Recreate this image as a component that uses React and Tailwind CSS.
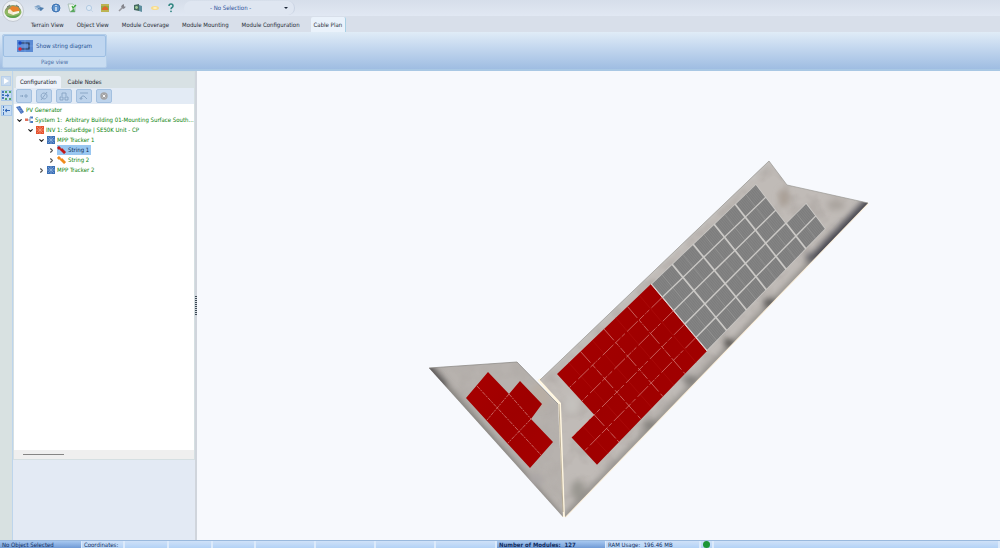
import React, { useState } from "react";
import { ChevronDown, ChevronRight } from "lucide-react";

const pages = [
  "Terrain View",
  "Object View",
  "Module Coverage",
  "Module Mounting",
  "Module Configuration",
  "Cable Plan",
];

const quickIcons = [
  {
    name: "Projects",
    art: (
      <>
        <path d="M0 4l4-2 3 1-3 2z" fill="#7fa3c8" />
        <path d="M3 6l3-2 4 1-3 3z" fill="#4f7dad" />
        <path d="M1 5l3 2 2-1" stroke="#9bbbd9" strokeWidth="1" fill="none" />
      </>
    ),
  },
  {
    name: "Information",
    art: (
      <>
        <circle cx="5" cy="5" r="4" fill="#5d92cc" stroke="#2d64a8" strokeWidth="0.8" />
        <path d="M5 2v1M5 4v4" stroke="#fff" strokeWidth="1.2" />
      </>
    ),
  },
  {
    name: "Check project",
    art: (
      <>
        <path d="M1 1h5l2 2v6H3z" fill="#eef5ee" stroke="#8aa79a" strokeWidth="0.6" />
        <path d="M5 3l1 2 3-3" stroke="#3faa3b" strokeWidth="1.3" fill="none" />
        <path d="M3 9l4-4 1 4z" fill="#5aa860" />
      </>
    ),
  },
  {
    name: "Search",
    art: (
      <>
        <circle cx="5" cy="5" r="2.6" fill="#dfeaf6" stroke="#b3cbe3" strokeWidth="1" />
        <path d="M7 7l2 2" stroke="#c6d6e7" strokeWidth="1" />
      </>
    ),
  },
  {
    name: "Map section",
    art: (
      <>
        <rect x="1" y="1" width="8" height="8" fill="#8fae4b" />
        <path d="M1 2h8M1 8h8" stroke="#e9b95c" strokeWidth="1.2" />
        <path d="M2 5l3-2 3 2v2H2z" fill="#df6a2c" />
      </>
    ),
  },
  {
    name: "Options",
    art: (
      <>
        <path d="M2 8l3-3" stroke="#9a9aa0" strokeWidth="1.6" />
        <path d="M4 4l1-2 2-1v2l1 1 1-1-1 2-2 1z" fill="#85868d" />
      </>
    ),
  },
  {
    name: "Screenshot",
    art: (
      <>
        <path d="M1 2l5-1v7l-5-1z" fill="#456a61" />
        <path d="M6 2l3 1v6l-3-1z" fill="#5e8fa0" />
        <circle cx="3.5" cy="4.5" r="1.4" fill="#a7d09c" />
      </>
    ),
  },
  {
    name: "Sun position",
    art: (
      <>
        <ellipse cx="5" cy="5" rx="4" ry="2" fill="#f8dc8c" />
        <ellipse cx="5" cy="5" rx="2" ry="0.8" fill="#fff7d8" />
      </>
    ),
  },
  {
    name: "Help",
    art: (
      <>
        <path d="M3 3q0-2 2-2t2 2q0 1-1 1.5t-1 1.7" stroke="#2f8580" strokeWidth="1.5" fill="none" />
        <circle cx="5" cy="8.3" r="0.9" fill="#2f8580" />
      </>
    ),
  },
];

const toolIcons = [
  { name: "Connect", art: <path d="M1 5h3M3 4l1 1-1 1M6 4h2v2H6z" /> },
  { name: "Clear", art: <path d="M5 2a3 3 0 1 0 .1 0M2 9l6-8" /> },
  { name: "Group", art: <path d="M3 5V2h4v3M1 6h3v3H1zM6 6h3v3H6z" /> },
  { name: "Route", art: <path d="M1 2h8M2 7q1-3 3-2l3 3M1 7h2v1H1z" /> },
];

const PanelIcon = ({ fill, line }) => (
  <svg viewBox="0 0 8 8" className="h-2 w-2 shrink-0">
    <rect width="8" height="8" fill={fill} />
    <path d="M1 1l6 6M7 1L1 7M4 0v8M0 4h8" stroke={line} strokeWidth="0.6" opacity="0.8" />
  </svg>
);

const StringIcon = ({ color }) => (
  <svg viewBox="0 0 9 8" className="h-2 w-[9px] shrink-0">
    <path d="M1 1l7 6" stroke={color} strokeWidth="1.5" />
    <path d="M0 2l2-2 2 2-2 2zM3 4l2-2 2 2-2 2zM5 6l2-2 2 2-2 2z" fill={color} />
  </svg>
);

const icons = {
  generator: (
    <svg viewBox="0 0 8 8" className="h-2 w-2 shrink-0">
      <path d="M0 1l4-1 4 6-3 2z" fill="#4670bd" />
      <path d="M1 3l4-1M3 5l4-1M2 1l4 6" stroke="#9bb8e8" strokeWidth="0.4" />
    </svg>
  ),
  system: (
    <svg viewBox="0 0 8 8" className="h-2 w-2 shrink-0">
      <path d="M3 4h2M5 1v6M5 1h1M5 6h1" stroke="#6b7f9d" strokeWidth="0.7" fill="none" />
      <rect x="0" y="2.5" width="3" height="2.5" fill="#e2705a" />
      <rect x="5.5" y="0.5" width="2.5" height="2" fill="#4a7cc4" />
      <rect x="5.5" y="5" width="2.5" height="2" fill="#4a7cc4" />
    </svg>
  ),
  inverter: <PanelIcon fill="#e5502d" line="#fac0a8" />,
  tracker: <PanelIcon fill="#3b6fb6" line="#b5d2f2" />,
  red: <StringIcon color="#c01818" />,
  orange: <StringIcon color="#f08a1c" />,
};

const treeRows = [
  { label: "PV Generator", icon: "generator", pad: "pl-[2px]", state: "none" },
  {
    label: "System 1:  Arbitrary Building 01-Mounting Surface South...",
    icon: "system",
    pad: "pl-[2px]",
    state: "open",
  },
  { label: "INV 1: SolarEdge | SE50K Unit - CP", icon: "inverter", pad: "pl-[13px]", state: "open" },
  { label: "MPP Tracker 1", icon: "tracker", pad: "pl-[24px]", state: "open" },
  { label: "String 1", icon: "red", pad: "pl-[34px]", state: "closed" },
  { label: "String 2", icon: "orange", pad: "pl-[34px]", state: "closed" },
  { label: "MPP Tracker 2", icon: "tracker", pad: "pl-[24px]", state: "closed" },
];

const TopBar = () => (
  <div className="flex h-4 items-center bg-linear-to-b from-[#d6deea] to-[#e1e8f3] pl-[34px]">
    <div className="flex w-[142px] items-center justify-between">
      {quickIcons.map((icon) => (
        <button key={icon.name} aria-label={icon.name}>
          <svg viewBox="0 0 10 10" className="block h-[10px] w-[10px]">
            {icon.art}
          </svg>
        </button>
      ))}
    </div>
    <div className="relative ml-2 flex items-center">
      <select
        aria-label="Selection"
        className="h-[14px] w-[111px] appearance-none rounded-full border-r border-[#c9d2e2] bg-[#dfe6f1] pl-[26px] text-[#2c509a]"
      >
        <option>- No Selection -</option>
      </select>
      <svg viewBox="0 0 4 2" className="pointer-events-none absolute right-[7px] h-[2px] w-1">
        <path d="M0 0h4L2 2z" fill="#1d2738" />
      </svg>
    </div>
  </div>
);

const Logo = () => (
  <button
    aria-label="Application menu"
    className="absolute top-0 left-[2px] h-[22px] w-[22px] rounded-full border border-[#c3c9d2] bg-[#eef1f4]"
  >
    <svg viewBox="0 0 20 20" className="block h-5 w-5">
      <ellipse cx="10" cy="11" rx="8.5" ry="6" fill="#8fb763" />
      <path d="M2 10q1-6 8-6t8 6l-5-3-7 1z" fill="#8a9a68" />
      <path d="M5 9l4-4 6 1 2 4-6 1z" fill="#e9822c" />
      <path d="M5 9l2-1 3 3v3l-5-2z" fill="#f7ead2" />
      <path d="M10 11l6-1v2l-6 2z" fill="#fbf5e6" />
      <path d="M3 14q7 3 14-1-2 4-7 4t-7-3z" fill="#5ba24f" />
      <path d="M4 6l3-2M13 4l3 2" stroke="#58615c" strokeWidth="0.8" />
    </svg>
  </button>
);

const Ribbon = () => (
  <div className="h-[39px] border-b-2 border-[#a9c8e4] bg-linear-to-b from-[#e0ecf7] via-[#bfd4ed] to-[#9fbde2] pt-[2px] pl-[2px]">
    <div className="flex h-[34px] w-[105px] flex-col rounded-[2px] border border-[#b3cde9] bg-[#c8dcf1]">
      <button className="flex h-[22px] items-center justify-center gap-[3px] rounded-[2px] border border-[#9ebfe3] bg-[#bfd6f0] text-[#234f91]">
        <svg viewBox="0 0 16 12" className="h-3 w-4">
          <rect width="16" height="12" fill="#5b8bd4" />
          <path d="M3 3h9v6H3" stroke="#26334d" strokeWidth="1.2" fill="none" />
          <path d="M8 0v12M0 6h16" stroke="#86ade6" strokeWidth="0.5" />
          <circle cx="3" cy="3" r="1.7" fill="#1846c2" />
          <circle cx="3" cy="9" r="1.7" fill="#e0263c" />
        </svg>
        Show string diagram
      </button>
      <div className="flex flex-1 items-center justify-center text-[#4b6fa5]">Page view</div>
    </div>
  </div>
);

const Rail = () => (
  <div className="flex w-[13px] shrink-0 flex-col items-center gap-1 border-r border-[#bdd5ec] bg-[#d8e1e1] pt-[5px]">
    <button aria-label="Select" className="h-[10px] w-[10px] border border-[#b9d0ea] bg-[#c9dbef]">
      <svg viewBox="0 0 8 8" className="block h-2 w-2">
        <path d="M2 1l5 3-5 3z" fill="#fff" />
      </svg>
    </button>
    <button aria-label="String layout" className="h-[11px] w-[11px] border border-[#a9c7e8] bg-[#c6dcf3]">
      <svg viewBox="0 0 9 9" className="block h-[9px] w-[9px]">
        <path d="M0 0h2v2H0zM0 3h2v2H0zM0 6h2v2H0z" fill="#4579bf" />
        <path d="M3 4.5h4M5 3l2 1.5L5 6" stroke="#2e63b4" strokeWidth="0.9" fill="none" />
        <path d="M3 0h2v2H3zM7 0h2v2H7zM3 7h2v2H3zM7 7h2v2H7z" fill="#52a36f" />
      </svg>
    </button>
    <button aria-label="Cable layout" className="h-[11px] w-[11px] border border-[#a9c7e8] bg-[#c6dcf3]">
      <svg viewBox="0 0 9 9" className="block h-[9px] w-[9px]">
        <path d="M1 0h1v2H1zM1 3h1v2H1zM1 6h1v3H1z" fill="#4579bf" />
        <path d="M3 4.5h5M5 3L3 4.5 5 6" stroke="#2e63b4" strokeWidth="1" fill="none" />
      </svg>
    </button>
  </div>
);

const Sidebar = () => {
  const [tab, setTab] = useState("Configuration");
  const [selected, setSelected] = useState("String 1");

  return (
    <aside className="flex w-[182px] shrink-0 flex-col bg-[#e3eaf4]">
      <div className="flex min-h-0 flex-1 flex-col border border-[#d5dfe2] bg-[#d8e1e4]">
        <div className="flex h-4 shrink-0 items-end pl-[2px]">
          {["Configuration", "Cable Nodes"].map((name) => (
            <button
              key={name}
              onClick={() => setTab(name)}
              className={
                tab === name
                  ? "h-3 rounded-t-[2px] bg-[#eef3fa] px-1 text-[#14181f]"
                  : "h-3 px-[7px] text-[#14181f]"
              }
            >
              {name}
            </button>
          ))}
        </div>
        <div className="flex h-4 shrink-0 items-center gap-1 bg-[#e3ebf5] pl-[2px]">
          {toolIcons.map((tool) => (
            <button
              key={tool.name}
              aria-label={tool.name}
              className="flex h-[14px] w-4 items-center justify-center rounded-[2px] border border-[#a3c0e0] bg-[#bdd3eb]"
            >
              <svg viewBox="0 0 10 10" className="h-[10px] w-[10px]" fill="none" stroke="#87a3c3" strokeWidth="0.9">
                {tool.art}
              </svg>
            </button>
          ))}
          <button
            aria-label="Delete"
            className="flex h-[14px] w-4 items-center justify-center rounded-[2px] border border-[#a3c0e0] bg-[#bdd3eb]"
          >
            <svg viewBox="0 0 8 8" className="h-2 w-2 shrink-0">
              <circle cx="4" cy="4" r="3.7" fill="#a3a4a6" />
              <path d="M2.7 2.7l2.6 2.6M5.3 2.7L2.7 5.3" stroke="#fff" strokeWidth="0.9" />
            </svg>
          </button>
        </div>
        <ul className="min-h-0 flex-1 overflow-hidden bg-white pt-px">
          {treeRows.map((row) => (
            <li key={row.label} className={row.pad}>
              <button
                onClick={() => setSelected(row.label)}
                className="flex h-[10px] items-center whitespace-pre text-[#0a820a]"
              >
                {row.state === "open" && (
                  <ChevronDown className="mr-[2px] h-[7px] w-[7px] shrink-0 text-[#222]" strokeWidth={4} />
                )}
                {row.state === "closed" && (
                  <ChevronRight className="mr-[2px] h-[7px] w-[7px] shrink-0 text-[#555]" strokeWidth={4} />
                )}
                <span
                  className={
                    selected === row.label
                      ? "flex h-[10px] items-center gap-[2px] bg-[#99c7f1] pr-[2px] text-[#0d2b52]"
                      : "flex h-[10px] items-center gap-[2px]"
                  }
                >
                  {icons[row.icon]}
                  {row.label}
                </span>
              </button>
            </li>
          ))}
        </ul>
        <div className="flex h-[9px] shrink-0 items-center bg-[#efefef] pl-[9px]">
          <div className="h-px w-[41px] bg-[#858585]" />
        </div>
      </div>
      <div className="h-[80px] shrink-0" />
    </aside>
  );
};

const Splitter = () => (
  <div className="flex w-[2px] shrink-0 items-center justify-center bg-[#d0d5dc]">
    <svg viewBox="0 0 2 20" className="h-5 w-[2px]">
      <path d="M1 0v20" stroke="#3e4a55" strokeWidth="2" strokeDasharray="1 1" />
    </svg>
  </div>
);

// corner order: top start, top end, bottom start, bottom end
const makeGrid = (a, b, c, d, cols, rows) => (col, row) => {
  const s = col / cols;
  const t = row / rows;
  return [0, 1].map(
    (i) => (a[i] * (1 - s) + b[i] * s) * (1 - t) + (c[i] * (1 - s) + d[i] * s) * t
  );
};

const grey = makeGrid([651, 284], [756, 184], [707, 351], [806, 249], 5, 5);
const red = makeGrid([651, 284], [557, 374], [707, 351], [619, 442], 4, 5);

const toPath = (pts) => "M" + pts.map((p) => p.join(" ")).join("L") + "Z";
const toLine = (a, b) => "M" + a.join(" ") + "L" + b.join(" ");

const greyCells = [];
const redCells = [];
for (let row = 0; row < 5; row++) {
  for (let col = 0; col < (row < 3 ? 5 : 6); col++) {
    greyCells.push([col, row]);
  }
  for (let col = 0; col < (row < 3 ? 4 : 5); col++) {
    redCells.push([col, row]);
  }
}

const redLines = [
  ...[1, 2, 3].map((col) => toLine(red(col, 0), red(col, 5))),
  toLine(red(4, 3), red(4, 5)),
  ...[1, 2].map((row) => toLine(red(0, row), red(4, row))),
  ...[3, 4].map((row) => toLine(red(0, row), red(5, row))),
];

const RoofView = () => (
  <main className="min-w-0 flex-1 bg-[#f7f9fd]">
    <svg
      viewBox="197 71 803 469"
      preserveAspectRatio="xMidYMid meet"
      className="h-full w-full"
      role="img"
      aria-label="Roof with module strings"
    >
      <defs>
        <clipPath id="mainRoof">
          <path d="M769 161L787 185L868 203L565 517L561 403L540 380Z" />
        </clipPath>
        <clipPath id="sideRoof">
          <path d="M429 368L517 362L558 404L563 517Z" />
        </clipPath>
        <filter id="soft" x="-50%" y="-50%" width="200%" height="200%">
          <feGaussianBlur stdDeviation="3" />
        </filter>
        <filter id="stone" x="0" y="0" width="100%" height="100%">
          <feTurbulence type="fractalNoise" baseFrequency="0.05" numOctaves="3" seed="7" />
          <feColorMatrix values="0 0 0 0 0.4  0 0 0 0 0.37  0 0 0 0 0.35  3 0 0 0 -1.3" />
        </filter>
        <pattern id="cells" width="2" height="2" patternUnits="userSpaceOnUse" patternTransform="rotate(50)">
          <rect width="2" height="2" fill="#858585" />
          <path d="M0 0H2" stroke="#747474" strokeWidth="1" />
        </pattern>
        <linearGradient id="redFill" x1="0" y1="0" x2="1" y2="1">
          <stop offset="0" stopColor="#a80000" />
          <stop offset="0.5" stopColor="#9e0000" />
          <stop offset="1" stopColor="#a60000" />
        </linearGradient>
      </defs>

      <path d="M868 203L565 517" stroke="#fbeed8" strokeWidth="2" />
      <path d="M539 379L560 403L564 517" stroke="#fff6e0" strokeWidth="4" fill="none" />

      <g clipPath="url(#mainRoof)">
        <rect x="530" y="150" width="350" height="380" fill="#c0bbb7" />
        <rect x="530" y="150" width="350" height="380" filter="url(#stone)" opacity="0.5" />
        <g filter="url(#soft)">
          <path d="M872 200L560 523" stroke="#8d8a86" strokeWidth="6" />
          <path d="M872 200L815 259" stroke="#45454d" strokeWidth="11" />
          <ellipse cx="812" cy="258" rx="6" ry="5" fill="#5a5a60" />
          <ellipse cx="770" cy="303" rx="7" ry="5" fill="#5c5a59" />
          <ellipse cx="729" cy="343" rx="5" ry="4" fill="#3f3c3b" />
          <ellipse cx="690" cy="380" rx="7" ry="5" fill="#817e7a" />
          <ellipse cx="650" cy="425" rx="7" ry="5" fill="#85827e" />
          <ellipse cx="578" cy="490" rx="7" ry="10" fill="#9a9791" />
          <ellipse cx="784" cy="198" rx="5" ry="9" fill="#a89e94" />
          <ellipse cx="836" cy="205" rx="9" ry="5" fill="#a9a39d" />
          <path d="M535 378L768 158" stroke="#cbcac8" strokeWidth="7" />
          <ellipse cx="572" cy="405" rx="8" ry="10" fill="#c4c1bd" />
        </g>
      </g>
      <path d="M540 380L769 161L787 185L868 203" stroke="#999894" strokeWidth="0.7" fill="none" />

      <g clipPath="url(#sideRoof)">
        <rect x="425" y="355" width="145" height="165" fill="#b7b2ae" />
        <rect x="425" y="355" width="145" height="165" filter="url(#stone)" opacity="0.3" />
        <g filter="url(#soft)">
          <path d="M425 364L563 522" stroke="#7c7975" strokeWidth="7" />
          <path d="M425 364L445 387" stroke="#4e4c4b" strokeWidth="8" />
          <ellipse cx="541" cy="395" rx="10" ry="13" fill="#b8aea4" />
          <ellipse cx="535" cy="480" rx="8" ry="6" fill="#aaa6a5" />
        </g>
      </g>
      <path d="M429 368L517 362L558 404" stroke="#8f8d89" strokeWidth="0.8" fill="none" />
      <path d="M559 404L563 512" stroke="#8f8169" strokeWidth="0.6" />

      <path
        d={toPath([grey(0, 0), grey(5, 0), grey(5, 3), grey(6, 3), grey(6, 5), grey(0, 5)])}
        fill="#cbc9c6"
      />
      {greyCells.map(([col, row]) => (
        <path
          key={`${col}-${row}`}
          d={toPath([
            grey(col + 0.03, row + 0.04),
            grey(col + 0.97, row + 0.04),
            grey(col + 0.97, row + 0.96),
            grey(col + 0.03, row + 0.96),
          ])}
          fill="url(#cells)"
        />
      ))}
      {greyCells.map(([col, row]) => (
        <path
          key={`${col}-${row}-mid`}
          d={toLine(grey(col + 0.5, row + 0.05), grey(col + 0.5, row + 0.95))}
          stroke="#a9a8a6"
          strokeWidth="0.4"
        />
      ))}

      <path
        d={toPath([red(0, 0), red(4, 0), red(4, 3), red(5, 3), red(5, 5), red(0, 5)])}
        fill="url(#redFill)"
      />
      {redCells.map(([col, row]) => (
        <path
          key={`${col}-${row}-red`}
          d={toLine(red(col + 0.5, row), red(col + 0.5, row + 1))}
          stroke="#b31512"
          strokeWidth="0.5"
        />
      ))}
      <path d={toLine(red(0, 0), red(0, 5))} stroke="#e5dada" strokeWidth="1" />
      {redLines.map((d) => (
        <path key={d} d={d} stroke="#d98882" strokeWidth="0.7" strokeDasharray="15 3 4 1 1 1 7 2" />
      ))}

      <path
        d="M488 372L509 394L520 381L542 404L531 419L553 442L530 468L466 398Z"
        fill="url(#redFill)"
      />
      <path
        d="M477 386L541 455M509 394L487 420M531 419L508 443M509 394L531 419"
        stroke="#d98d86"
        strokeWidth="0.7"
        strokeDasharray="4 1 2 1"
      />
    </svg>
  </main>
);

const dark =
  "flex items-center border-r border-[#dceafb] bg-linear-to-b from-[#a8c8f0] to-[#709bd6] pl-[2px]";
const light =
  "flex items-center border-r-2 border-[#dceafb] bg-linear-to-b from-[#cfe1f8] to-[#b3d2f6] pl-[2px]";

const StatusBar = () => (
  <footer className="flex h-2 shrink-0 border-t border-[#9ab9dd] whitespace-pre text-[#102c60]">
    <div className={`${dark} w-[82px]`}>No Object Selected</div>
    <div className={`${light} w-[43px]`}>Coordinates:</div>
    <div className={`${light} w-[44px]`} />
    <div className={`${light} w-[44px]`} />
    <div className={`${light} w-[43px]`} />
    <div className={`${light} w-[60px]`} />
    <div className={`${light} w-[60px]`} />
    <div className={`${light} w-[60px]`} />
    <div className={`${light} w-[61px]`} />
    <div className={`${dark} w-[109px] font-bold`}>Number of Modules:  127</div>
    <div className={`${light} w-[95px]`}>RAM Usage:  196.46 MB</div>
    <div className={`${light} w-[13px]`}>
      <span className="h-[7px] w-[7px] shrink-0 rounded-full bg-[#1d9637]" />
    </div>
    <div className={`${light} flex-1`} />
  </footer>
);

const App = () => {
  const [page, setPage] = useState("Cable Plan");

  return (
    <div className="relative flex h-screen flex-col overflow-hidden bg-[#d8dfea] font-['DejaVu_Sans_Condensed','Liberation_Sans',sans-serif] text-[6px] leading-2">
      <TopBar />
      <Logo />
      <nav className="flex h-4 items-end gap-px bg-[#d8dfea] pl-[25px] text-[#262c36]">
        {pages.map((name) => (
          <button
            key={name}
            onClick={() => setPage(name)}
            className={
              page === name
                ? "ml-1 h-[15px] rounded-t-[2px] border-r border-[#a8d0e4] bg-[#eaf2fb] px-[3px]"
                : "h-[15px] px-[6px]"
            }
          >
            {name}
          </button>
        ))}
      </nav>
      <Ribbon />
      <div className="flex min-h-0 flex-1">
        <Rail />
        <Sidebar />
        <Splitter />
        <RoofView />
      </div>
      <StatusBar />
    </div>
  );
};

export default App;
